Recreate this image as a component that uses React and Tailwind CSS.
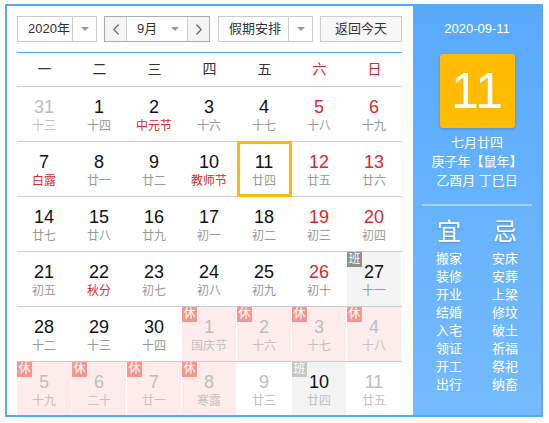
import React from 'react';

const rows = [
  [
    { d: 31, l: '十三', other: true },
    { d: 1, l: '十四' },
    { d: 2, l: '中元节', fest: true },
    { d: 3, l: '十六' },
    { d: 4, l: '十七' },
    { d: 5, l: '十八', red: true },
    { d: 6, l: '十九', red: true },
  ],
  [
    { d: 7, l: '白露', fest: true },
    { d: 8, l: '廿一' },
    { d: 9, l: '廿二' },
    { d: 10, l: '教师节', fest: true },
    { d: 11, l: '廿四', today: true },
    { d: 12, l: '廿五', red: true },
    { d: 13, l: '廿六', red: true },
  ],
  [
    { d: 14, l: '廿七' },
    { d: 15, l: '廿八' },
    { d: 16, l: '廿九' },
    { d: 17, l: '初一' },
    { d: 18, l: '初二' },
    { d: 19, l: '初三', red: true },
    { d: 20, l: '初四', red: true },
  ],
  [
    { d: 21, l: '初五' },
    { d: 22, l: '秋分', fest: true },
    { d: 23, l: '初七' },
    { d: 24, l: '初八' },
    { d: 25, l: '初九' },
    { d: 26, l: '初十', red: true },
    { d: 27, l: '十一', work: true },
  ],
  [
    { d: 28, l: '十二' },
    { d: 29, l: '十三' },
    { d: 30, l: '十四' },
    { d: 1, l: '国庆节', other: true, rest: true },
    { d: 2, l: '十六', other: true, rest: true },
    { d: 3, l: '十七', other: true, rest: true },
    { d: 4, l: '十八', other: true, rest: true },
  ],
  [
    { d: 5, l: '十九', other: true, rest: true },
    { d: 6, l: '二十', other: true, rest: true },
    { d: 7, l: '廿一', other: true, rest: true },
    { d: 8, l: '寒露', other: true, rest: true },
    { d: 9, l: '廿三', other: true },
    { d: 10, l: '廿四', other: true, work: true },
    { d: 11, l: '廿五', other: true },
  ],
];

const yi = ['搬家', '装修', '开业', '结婚', '入宅', '领证', '开工', '出行'];
const ji = ['安床', '安葬', '上梁', '修坟', '破土', '祈福', '祭祀', '纳畜'];

const Caret = () => (
  <span className="w-0 h-0 border-x-[4px] border-t-[4px] border-x-transparent border-t-[#999]" />
);

const Chevron = ({ dir }) => (
  <svg width="6" height="11" viewBox="0 0 6 11" fill="none" stroke="#666" strokeWidth="1.2">
    {dir === 'left' ? <polyline points="5.5,0.5 0.8,5.5 5.5,10.5" /> : <polyline points="0.5,0.5 5.2,5.5 0.5,10.5" />}
  </svg>
);

const DayCell = ({ c }) => {
  let bg = '';
  if (c.rest) bg = 'bg-[#fdeceb]';
  if (c.work) bg = 'bg-[#f3f3f3]';

  let numColor = 'text-[#111]';
  if (c.red) numColor = 'text-[#e3262f]';
  if (c.other) numColor = 'text-[#bdbdbd]';
  if (c.other && c.work) numColor = 'text-[#111]';

  let lunarColor = 'text-[#999]';
  if (c.fest) lunarColor = 'text-[#e3262f]';
  if (c.other) lunarColor = 'text-[#c2c2c2]';

  return (
    <div className="relative h-full">
      <div className={`h-full mr-px flex flex-col items-center pt-[10px] ${bg}`}>
        <span className={`text-[18px] leading-[20px] ${numColor}`}>{c.d}</span>
        <span className={`text-[12px] leading-[18px] ${lunarColor}`}>{c.l}</span>
      </div>
      {c.rest && (
        <span className="absolute top-0 left-0 w-[15px] h-[15px] bg-[#f5978f] text-white text-[12px] leading-[15px] text-center">
          休
        </span>
      )}
      {c.work && (
        <span
          className={`absolute top-0 left-0 w-[15px] h-[15px] text-white text-[12px] leading-[15px] text-center ${
            c.other ? 'bg-[#c6c6c6]' : 'bg-[#8e8e8e]'
          }`}
        >
          班
        </span>
      )}
      {c.today && <div className="absolute left-0 right-0 top-[-1px] bottom-[-1px] border-[3px] border-[#ffbb00]" />}
    </div>
  );
};

export default function App() {
  return (
    <div
      className="w-[549px] h-[423px] bg-white pt-[4px] pl-[5px]"
      style={{ fontFamily: '"Liberation Sans", "Noto Sans CJK SC", sans-serif' }}
    >
      <div className="w-[538px] h-[413px] border-2 border-[#56aafe] flex overflow-hidden">
        {/* calendar */}
        <div className="w-[406px] h-full pl-[10px] pt-[10px] overflow-hidden">
          <div className="w-[385px] h-[26px] flex text-[13px] text-[#333] whitespace-nowrap">
            <div className="w-[80px] h-full border border-[#ccc] flex">
              <div className="flex-1 flex items-center pl-[10px]">2020年</div>
              <div className="w-[24px] border-l border-[#ccc] flex items-center justify-center">
                <Caret />
              </div>
            </div>
            <div className="w-[106px] h-full ml-[7px] border border-[#aaa] flex">
              <div className="w-[22px] bg-[#f4f4f4] border-r border-[#ccc] flex items-center justify-center">
                <Chevron dir="left" />
              </div>
              <div className="flex-1 flex items-center justify-between pl-[10px] pr-[8px]">
                <span>9月</span>
                <Caret />
              </div>
              <div className="w-[22px] bg-[#f4f4f4] border-l border-[#ccc] flex items-center justify-center">
                <Chevron dir="right" />
              </div>
            </div>
            <div className="w-[95px] h-full ml-[8px] border border-[#ccc] flex">
              <div className="flex-1 flex items-center pl-[10px]">假期安排</div>
              <div className="w-[24px] border-l border-[#ccc] flex items-center justify-center">
                <Caret />
              </div>
            </div>
            <div className="w-[82px] h-full ml-[7px] border border-[#ccc] bg-[#f7f7f7] flex items-center justify-center">
              返回今天
            </div>
          </div>

          <div className="w-[385px] mt-[10px] border-t border-[#56aafe]" />
          <div className="w-[385px] h-[34px] grid grid-cols-7 border-b border-[#ccc] text-[14px] text-[#333]">
            {['一', '二', '三', '四', '五', '六', '日'].map((w, i) => (
              <div key={w} className={`flex items-center justify-center ${i > 4 ? 'text-[#e3262f]' : ''}`}>
                {w}
              </div>
            ))}
          </div>

          {rows.map((row, ri) => (
            <div key={ri} className="w-[385px] h-[55px] grid grid-cols-7 border-b border-[#ccc]">
              {row.map((c, ci) => (
                <DayCell key={ci} c={c} />
              ))}
            </div>
          ))}
        </div>

        {/* side panel */}
        <div className="flex-1 h-full bg-gradient-to-b from-[#58aaff] to-[#75bbfc] flex flex-col items-center pt-[13px] text-white">
          <div className="text-[13px] leading-[20px]">2020-09-11</div>
          <div className="mt-[15px] w-[75px] h-[74px] rounded-[3px] bg-[#ffbb00] shadow-[0_1px_3px_rgba(0,0,0,0.2)] flex items-center justify-center text-[50px] leading-none">
            11
          </div>
          <div className="mt-[5px] text-[13px] leading-[19px] text-center">
            <div>七月廿四</div>
            <div>庚子年【鼠年】</div>
            <div>乙酉月 丁巳日</div>
          </div>
          <div className="mt-[14px] w-[110px] h-[2px] bg-white/40" />
          <div className="mt-[12px] flex">
            <div className="w-[56px] flex flex-col items-center">
              <div className="text-[24px] leading-[28px] [text-shadow:0_1px_2px_rgba(0,0,0,0.2)]">宜</div>
              <div className="mt-[4px] text-[13px] leading-[18px] flex flex-col items-center">
                {yi.map((t) => (
                  <span key={t}>{t}</span>
                ))}
              </div>
            </div>
            <div className="w-[56px] flex flex-col items-center">
              <div className="text-[24px] leading-[28px] [text-shadow:0_1px_2px_rgba(0,0,0,0.2)]">忌</div>
              <div className="mt-[4px] text-[13px] leading-[18px] flex flex-col items-center">
                {ji.map((t) => (
                  <span key={t}>{t}</span>
                ))}
              </div>
            </div>
          </div>
        </div>
      </div>
    </div>
  );
}
